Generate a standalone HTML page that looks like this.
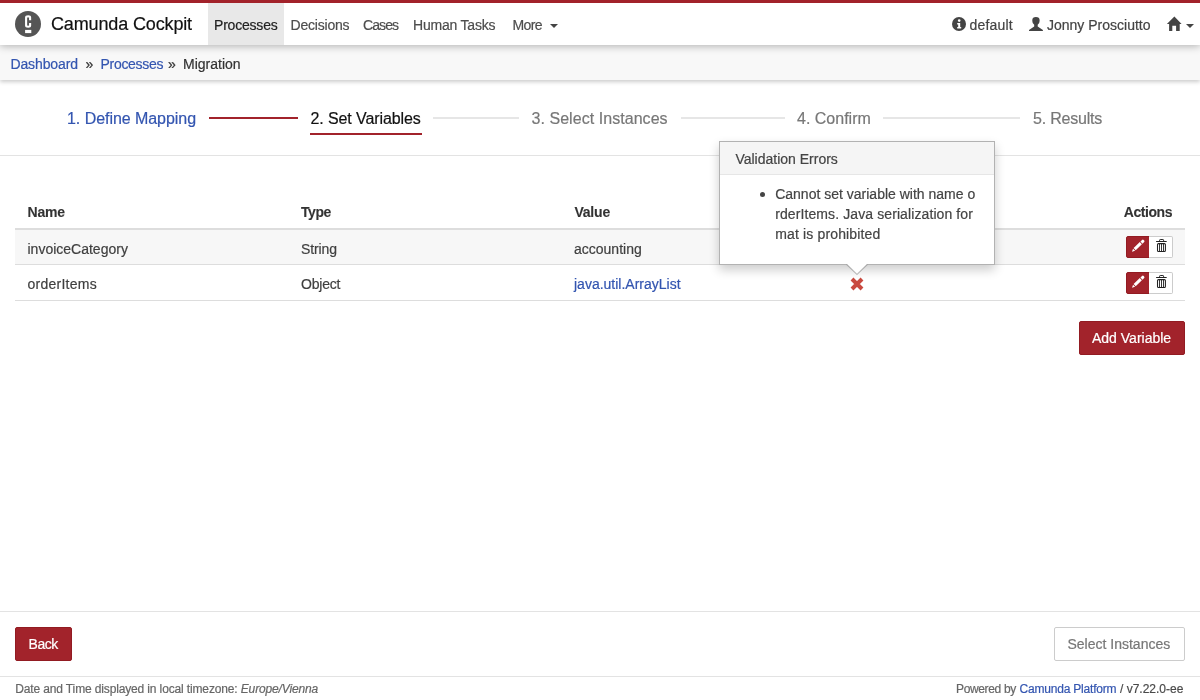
<!DOCTYPE html>
<html><head><meta charset="utf-8">
<style>
*{box-sizing:border-box;margin:0;padding:0}
html,body{width:1200px;height:700px;overflow:hidden;background:#fff}
body{position:relative;font-family:"Liberation Sans",sans-serif;font-size:14px;color:#3f3f3f}
.a{position:absolute;white-space:nowrap;line-height:1;-webkit-text-stroke:0.2px currentColor}
#top{position:absolute;left:0;top:0;width:1200px;height:3px;background:#a2222a;z-index:5}
#hdr{position:absolute;left:0;top:3px;width:1200px;height:42px;background:#fff;box-shadow:0 1px 8px rgba(0,0,0,.3);z-index:4}
#act{position:absolute;left:208px;top:0;width:76px;height:42px;background:#e8e8e8}
#crumb{position:absolute;left:0;top:45px;width:1200px;height:35px;background:#f8f8f8;box-shadow:0 2px 4px rgba(0,0,0,.2);z-index:3}
#wiz{position:absolute;left:0;top:80px;width:1200px;height:76px;border-bottom:1px solid #e3e3e3}
.ln{position:absolute;height:2px;top:117px;background:#e6e6e6}
.red{background:#a2232b}
.blue{color:#3355b0}
.gray{color:#777}
.th{font-weight:bold;color:#333;-webkit-text-stroke:0.1px #333}
.hl{position:absolute;left:15px;width:1170px;background:#ddd}
.btn{position:absolute;border-radius:2px;background:#a2232b;border:1px solid #921b22;color:#fff}
#pop{position:absolute;left:719px;top:141px;width:276px;height:124px;background:#fff;border:1px solid rgba(0,0,0,.3);box-shadow:0 5px 10px rgba(0,0,0,.2);z-index:6}
#poph{position:absolute;left:0;top:0;width:274px;height:33px;background:#f5f5f5;border-bottom:1px solid #e6e6e6}
</style></head><body>
<div id="root" style="position:absolute;left:0;top:0;width:1200px;height:700px;will-change:transform">
<div id="top"></div>
<div id="hdr">
  <div id="act"></div>
  <svg style="position:absolute;left:15px;top:8px" width="26" height="26" viewBox="0 0 26 26">
    <circle cx="13" cy="13" r="13" fill="#555"/>
    <path d="M15.1 9.2V6.6Q15.1 5.4 13.2 5.4Q11.1 5.4 11.1 6.6V14.5Q11.1 15.7 13.2 15.7Q15.1 15.7 15.1 14.5V11.9" fill="none" stroke="#fff" stroke-width="2.1"/>
    <rect x="10.1" y="18.9" width="6.2" height="3.2" fill="#fff"/>
  </svg>
  <div class="a" style="left:51px;top:11.5px;font-size:18px;color:#111;letter-spacing:-0.14px">Camunda Cockpit</div>
  <div class="a" style="left:214px;top:15.2px;letter-spacing:-0.2px;color:#222">Processes</div>
  <div class="a" style="left:290.5px;top:15px;letter-spacing:-0.2px;color:#4d4d4d">Decisions</div>
  <div class="a" style="left:363px;top:15px;letter-spacing:-0.9px;color:#4d4d4d">Cases</div>
  <div class="a" style="left:413px;top:15px;letter-spacing:-0.2px;color:#4d4d4d">Human Tasks</div>
  <div class="a" style="left:512.5px;top:15px;letter-spacing:-0.6px;color:#4d4d4d">More</div>
  <svg style="position:absolute;left:550px;top:21px" width="8" height="4" viewBox="0 0 8 4"><path d="M0 0h8L4 4z" fill="#444"/></svg>

  <svg style="position:absolute;left:952px;top:13.7px" width="14" height="14" viewBox="0 0 14 14">
    <circle cx="7" cy="7" r="7" fill="#444"/>
    <circle cx="7.2" cy="3.6" r="1.3" fill="#fff"/>
    <path d="M5.2 6h3v4h1v1.6H5.2V10h1V7.5h-1z" fill="#fff"/>
  </svg>
  <div class="a" style="left:969.5px;top:14.7px;letter-spacing:0.2px;color:#444">default</div>
  <svg style="position:absolute;left:1024px;top:9px" width="24" height="22" viewBox="0 0 24 22">
    <path d="M5 18.9V17.9L10.2 14.6V12.7Q8.3 11.7 8.3 9V8Q8.3 4.9 11.95 4.9Q15.6 4.9 15.6 8V9Q15.6 11.7 13.7 12.7V14.6L18.9 17.9V18.9Z" fill="#444"/>
  </svg>
  <div class="a" style="left:1047px;top:15px;color:#444">Jonny Prosciutto</div>
  <svg style="position:absolute;left:1160px;top:9px" width="26" height="22" viewBox="0 0 26 22">
    <path d="M14.4 4.4L6.9 11.9H9.1V18.9H12.3V13.7H16.1V18.9H19.7V11.9H21.6Z" fill="#444"/>
  </svg>
  <svg style="position:absolute;left:1186px;top:21px" width="8" height="4" viewBox="0 0 8 4"><path d="M0 0h8L4 4z" fill="#444"/></svg>
</div>

<div id="crumb">
  <div class="a blue" style="left:10.4px;top:11.9px;letter-spacing:-0.1px">Dashboard</div>
  <div class="a" style="left:85.5px;top:11.9px;color:#333">&raquo;</div>
  <div class="a blue" style="left:100.5px;top:11.9px;letter-spacing:-0.3px">Processes</div>
  <div class="a" style="left:168px;top:11.9px;color:#333">&raquo;</div>
  <div class="a" style="left:183px;top:11.9px;color:#333">Migration</div>
</div>

<div id="wiz"></div>
<div class="a blue" style="left:67px;top:110.5px;font-size:16px;letter-spacing:-0.05px">1. Define Mapping</div>
<div class="ln red" style="left:209px;width:89px"></div>
<div class="a" style="left:310.5px;top:110.5px;font-size:16px;color:#111;letter-spacing:-0.1px">2. Set Variables</div>
<div class="red" style="position:absolute;left:310px;top:133px;width:112px;height:2px"></div>
<div class="ln" style="left:433px;width:86px"></div>
<div class="a gray" style="left:531.5px;top:110.5px;font-size:16px;letter-spacing:0.05px">3. Select Instances</div>
<div class="ln" style="left:681px;width:104px"></div>
<div class="a gray" style="left:797px;top:110.5px;font-size:16px">4. Confirm</div>
<div class="ln" style="left:883px;width:137px"></div>
<div class="a gray" style="left:1033px;top:110.5px;font-size:16px;letter-spacing:-0.2px">5. Results</div>

<!-- table -->
<div class="a th" style="left:27.5px;top:205.2px;letter-spacing:-0.2px">Name</div>
<div class="a th" style="left:301px;top:205.2px;letter-spacing:-0.45px">Type</div>
<div class="a th" style="left:574.4px;top:205.2px;letter-spacing:-0.2px">Value</div>
<div class="a th" style="left:1123.8px;top:205.2px;letter-spacing:-0.45px">Actions</div>
<div class="hl" style="top:228px;height:2px"></div>
<div style="position:absolute;left:15px;top:230px;width:1170px;height:34px;background:#f7f7f7"></div>
<div class="hl" style="top:264px;height:1px"></div>
<div class="hl" style="top:300px;height:1px"></div>
<div class="a" style="left:27.5px;top:242px">invoiceCategory</div>
<div class="a" style="left:301px;top:242px;letter-spacing:-0.1px">String</div>
<div class="a" style="left:574px;top:242px">accounting</div>
<div class="a" style="left:27.5px;top:276.7px;letter-spacing:0.25px">orderItems</div>
<div class="a" style="left:301px;top:276.7px;letter-spacing:-0.2px">Object</div>
<div class="a blue" style="left:574px;top:276.7px">java.util.ArrayList</div>

<!-- action buttons -->
<div class="btn" style="left:1126px;top:236px;width:24px;height:22px;border-radius:2px 0 0 2px"></div>
<div style="position:absolute;left:1149px;top:236px;width:24px;height:22px;background:#fff;border:1px solid #ccc;border-left:none;border-radius:0 2px 2px 0"></div>
<div class="btn" style="left:1126px;top:272px;width:24px;height:22px;border-radius:2px 0 0 2px"></div>
<div style="position:absolute;left:1149px;top:272px;width:24px;height:22px;background:#fff;border:1px solid #ccc;border-left:none;border-radius:0 2px 2px 0"></div>

<svg style="position:absolute;left:1126px;top:236px" width="47" height="22" viewBox="0 0 47 22">
  <path d="M6.00 15.75L9.13 14.81L7.04 12.65ZM9.70 14.25L15.87 8.26L13.78 6.11L7.61 12.10ZM16.52 7.63L18.17 6.03Q18.96 5.26 17.91 4.19Q16.87 3.11 16.08 3.88L14.43 5.48Z" fill="#fff"/>
  <path d="M33.6 5.4V4.2Q33.6 3.5 34.3 3.5H36.9Q37.6 3.5 37.6 4.2V5.4" fill="none" stroke="#222" stroke-width="1"/>
  <rect x="30" y="4.9" width="10.8" height="1.1" rx="0.5" fill="#222"/>
  <rect x="31.5" y="7.6" width="7.9" height="7.8" rx="1" fill="none" stroke="#222" stroke-width="1.05"/>
  <path d="M33.5 7.8V15.2M35.5 7.8V15.2M37.5 7.8V15.2" stroke="#222" stroke-width="0.9"/>
</svg>
<svg style="position:absolute;left:1126px;top:272px" width="47" height="22" viewBox="0 0 47 22">
  <path d="M6.00 15.75L9.13 14.81L7.04 12.65ZM9.70 14.25L15.87 8.26L13.78 6.11L7.61 12.10ZM16.52 7.63L18.17 6.03Q18.96 5.26 17.91 4.19Q16.87 3.11 16.08 3.88L14.43 5.48Z" fill="#fff"/>
  <path d="M33.6 5.4V4.2Q33.6 3.5 34.3 3.5H36.9Q37.6 3.5 37.6 4.2V5.4" fill="none" stroke="#222" stroke-width="1"/>
  <rect x="30" y="4.9" width="10.8" height="1.1" rx="0.5" fill="#222"/>
  <rect x="31.5" y="7.6" width="7.9" height="7.8" rx="1" fill="none" stroke="#222" stroke-width="1.05"/>
  <path d="M33.5 7.8V15.2M35.5 7.8V15.2M37.5 7.8V15.2" stroke="#222" stroke-width="0.9"/>
</svg>
<!-- add variable -->
<div class="btn" style="left:1079px;top:321px;width:106px;height:34px"></div>
<div class="a" style="left:1092px;top:330.6px;color:#fff">Add Variable</div>

<!-- popover -->
<div id="pop">
  <div id="poph"></div>
  <div class="a" style="left:15.4px;top:9.6px;color:#444">Validation Errors</div>
  <div style="position:absolute;left:39.5px;top:50px;width:5px;height:5px;border-radius:50%;background:#444"></div>
  <div class="a" style="left:55.2px;top:45.2px;color:#444">Cannot set variable with name o</div>
  <div class="a" style="left:55.2px;top:65px;color:#444;letter-spacing:0.1px">rderItems. Java serialization for</div>
  <div class="a" style="left:55.2px;top:85px;color:#444;letter-spacing:0.15px">mat is prohibited</div>
</div>
<svg style="position:absolute;left:846px;top:264px;z-index:7" width="22" height="12" viewBox="0 0 22 12">
  <path d="M1 0.5L11 10.4L21 0.5Z" fill="#fff"/>
  <path d="M0.8 0.5L11 10.4L21.2 0.5" fill="none" stroke="rgba(0,0,0,.24)" stroke-width="1.2"/>
  <rect x="1.6" y="-1" width="18.8" height="2" fill="#fff"/>
</svg>
<svg style="position:absolute;left:849.5px;top:276.5px" width="14" height="14" viewBox="0 0 14 14">
  <path d="M2 2L12 12M12 2L2 12" stroke="#c9493f" stroke-width="4"/>
</svg>

<!-- footer -->
<div style="position:absolute;left:0;top:611px;width:1200px;height:1px;background:#e3e3e3"></div>
<div class="btn" style="left:15px;top:627px;width:57px;height:34px"></div>
<div class="a" style="left:28.6px;top:637.2px;color:#fff;letter-spacing:-0.5px">Back</div>
<div style="position:absolute;left:1054px;top:627px;width:131px;height:34px;border:1px solid #ccc;border-radius:2px;background:#fff"></div>
<div class="a gray" style="left:1067.5px;top:637.2px">Select Instances</div>
<div style="position:absolute;left:0;top:676px;width:1200px;height:1px;background:#e3e3e3"></div>
<div class="a" style="left:15.3px;top:683.3px;font-size:12px;letter-spacing:-0.14px;color:#666">Date and Time displayed in local timezone: <i>Europe/Vienna</i></div>
<div class="a" style="left:956px;top:683px;font-size:12px;letter-spacing:-0.35px;color:#666">Powered by</div>
<div class="a blue" style="left:1019.5px;top:683px;font-size:12px;letter-spacing:-0.2px">Camunda Platform</div>
<div class="a gray" style="left:1120px;top:683px;font-size:12px;color:#4a4a4a">/ v7.22.0-ee</div>
</div>
</body></html>
